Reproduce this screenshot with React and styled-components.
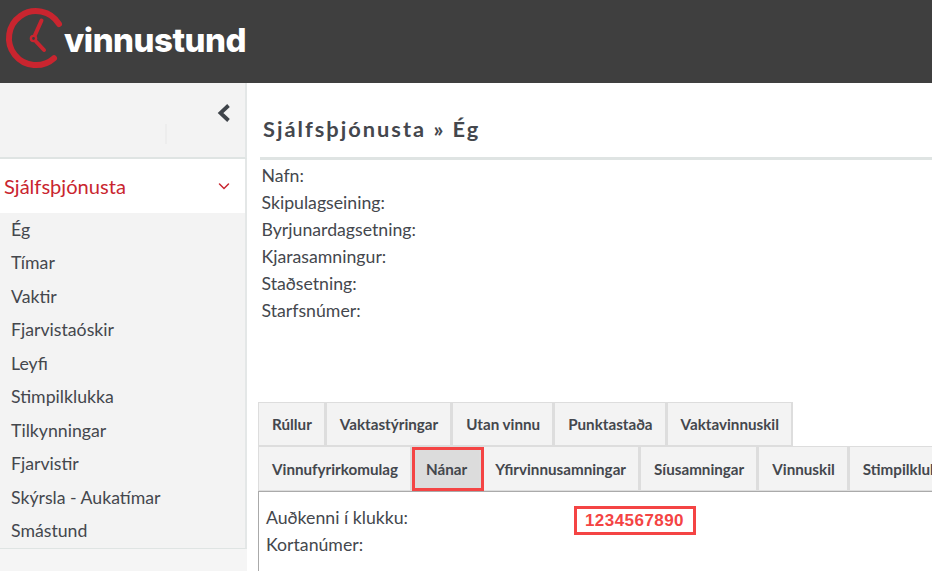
import React from 'react';
import styled, { createGlobalStyle } from 'styled-components';

const GlobalStyle = createGlobalStyle`
  html, body {
    margin: 0;
    height: 100%;
    overflow: hidden;
    background: #fff;
    font-family: Lato, "Liberation Sans", sans-serif;
    color: #44474d;
  }
`;

const menuItems = [
  'Ég', 'Tímar', 'Vaktir', 'Fjarvistaóskir', 'Leyfi',
  'Stimpilklukka', 'Tilkynningar', 'Fjarvistir', 'Skýrsla - Aukatímar', 'Smástund',
];
const fields = ['Nafn:', 'Skipulagseining:', 'Byrjunardagsetning:', 'Kjarasamningur:', 'Staðsetning:', 'Starfsnúmer:'];
const topTabs = ['Rúllur', 'Vaktastýringar', 'Utan vinnu', 'Punktastaða', 'Vaktavinnuskil'];
const bottomTabs = ['Vinnufyrirkomulag', 'Nánar', 'Yfirvinnusamningar', 'Síusamningar', 'Vinnuskil', 'Stimpilklukka'];

function ClockLogo() {
  return (
    <svg width="64" height="76" viewBox="0 0 64 76" fill="none" stroke="#c9252f" strokeLinecap="round">
      <path d="M59 24 A27 27 0 1 0 54 58.2" strokeWidth="6" />
      <path d="M41.5 20.5 L35 35" strokeWidth="4" />
      <path d="M36 41.5 L44 50" strokeWidth="4" />
      <circle cx="33.5" cy="38.5" r="2.6" strokeWidth="2.4" />
    </svg>
  );
}

export default function App() {
  return (
    <>
      <GlobalStyle />
      <Header>
        <ClockLogo />
        <LogoText>vinnustund</LogoText>
      </Header>
      <Body>
        <Sidebar>
          <SideTop>
            <svg width="14" height="20" viewBox="0 0 14 20" fill="none" stroke="#3f444a" strokeWidth="3.8" strokeLinejoin="miter">
              <path d="M11.5 2.5 L3.5 10 L11.5 17.5" />
            </svg>
            <FaintMark />
          </SideTop>
          <SectionRow>
            Sjálfsþjónusta
            <svg width="14" height="14" viewBox="0 0 14 14" fill="none" stroke="#c9252f" strokeWidth="1.5" strokeLinecap="round">
              <path d="M2.5 5 L7 9.5 L11.5 5" />
            </svg>
          </SectionRow>
          <Menu>
            {menuItems.map((item) => <MenuItem key={item}>{item}</MenuItem>)}
          </Menu>
          <SideFoot />
        </Sidebar>
        <Main>
          <Title>Sjálfsþjónusta » Ég</Title>
          <Fields>
            {fields.map((f) => <Field key={f}>{f}</Field>)}
          </Fields>
          <TabRow>
            {topTabs.map((t) => <Tab key={t}>{t}</Tab>)}
          </TabRow>
          <TabRow $second>
            {bottomTabs.map((t) => <Tab key={t} $active={t === 'Nánar'}>{t}</Tab>)}
          </TabRow>
          <Panel>
            <PanelRow>
              <span>Auðkenni í klukku:</span>
              <RedValue>1234567890</RedValue>
            </PanelRow>
            <PanelRow>
              <span>Kortanúmer:</span>
            </PanelRow>
          </Panel>
        </Main>
      </Body>
    </>
  );
}

const Header = styled.header`
  height: 83px;
  background: #3f3f3f;
  display: flex;
  align-items: flex-start;
`;

const LogoText = styled.span`
  font-family: Inter, "Open Sans", sans-serif;
  font-weight: 800;
  font-size: 33px;
  line-height: 36px;
  color: #fff;
  margin-top: 22px;
  letter-spacing: -0.5px;
`;

const Body = styled.div`
  display: flex;
  height: 488px;
  overflow: hidden;
`;

const Sidebar = styled.aside`
  flex: 0 0 247px;
  display: flex;
  flex-direction: column;
  background: #f5f5f5;
`;

const SideTop = styled.div`
  position: relative;
  height: 54px;
  background: #f3f3f3;
  border-right: 2px solid #e4e7e7;
  border-bottom: 2px solid #dfe4e3;
  display: flex;
  justify-content: flex-end;
  padding: 20px 14px 0 0;
`;

const FaintMark = styled.i`
  position: absolute;
  left: 165px;
  top: 41px;
  width: 2px;
  height: 20px;
  background: #ededed;
`;

const SectionRow = styled.div`
  height: 54px;
  background: #fff;
  border-right: 2px solid #e4e7e7;
  display: flex;
  align-items: center;
  justify-content: space-between;
  padding: 0 14px 0 4px;
  font-size: 20.1px;
  color: #c9252f;
`;

const Menu = styled.ul`
  list-style: none;
  margin: 0;
  padding: 0.5px 0 0;
  box-sizing: content-box;
  height: 334.5px;
  border-right: 2px solid #e4e7e7;
  border-bottom: 1px solid #dfe4e3;
  background: #f3f3f3;
`;

const MenuItem = styled.li`
  height: 33.5px;
  line-height: 32.4px;
  padding-left: 11px;
  font-size: 17.7px;
`;

const SideFoot = styled.div`
  flex: 1;
  background: #f5f5f5;
`;

const Main = styled.main`
  flex: 1;
  min-width: 0;
  overflow: hidden;
  padding-left: 11px;
`;

const Title = styled.h1`
  margin: 0 0 0 2px;
  padding: 32px 0 0 3px;
  height: 42px;
  font-size: 21.8px;
  line-height: 27px;
  font-weight: 700;
  letter-spacing: 2px;
  border-bottom: 3px solid #dfe4e3;
  white-space: nowrap;
`;

const Fields = styled.div`
  height: 240px;
  padding: 2px 0 0 3.5px;
`;

const Field = styled.div`
  height: 27px;
  line-height: 27px;
  font-size: 17.7px;
`;

const TabRow = styled.div`
  display: flex;
  height: ${(p) => (p.$second ? '45px' : '44px')};
  white-space: nowrap;
`;

const Tab = styled.div`
  position: relative;
  flex: none;
  box-sizing: border-box;
  display: flex;
  align-items: center;
  padding: 0 12px 0 13px;
  background: ${(p) => (p.$active ? '#dcdcdc' : '#f3f3f3')};
  border: 1px solid #ddd;
  border-right-width: 2px;
  font-size: 15.2px;
  font-weight: 700;

  /* red marker drawn over the tab, it overhangs the next one */
  ${(p) => p.$active && `
    &::after {
      content: '';
      position: absolute;
      z-index: 1;
      left: -1px;
      right: -5px;
      top: 0;
      bottom: -1px;
      border: 3px solid #f44444;
    }
  `}
`;

const Panel = styled.section`
  border: 1px solid #aaa;
  border-width: 1px 0 0 1px;
  padding: 12px 0 0 7px;
  height: 200px;
`;

const PanelRow = styled.div`
  display: grid;
  grid-template-columns: 307.5px auto;
  grid-template-rows: 27px;
  justify-content: start;
  align-items: center;
  font-size: 17.7px;
`;

const RedValue = styled.span`
  box-sizing: border-box;
  align-self: start;
  width: 122px;
  height: 29px;
  margin-top: 1.5px;
  padding-top: 2px;
  border: 3px solid #f44444;
  display: flex;
  align-items: center;
  justify-content: center;
  font-family: "Liberation Sans", sans-serif;
  font-weight: 700;
  font-size: 17px;
  letter-spacing: 0.45px;
  color: #f44444;
`;
